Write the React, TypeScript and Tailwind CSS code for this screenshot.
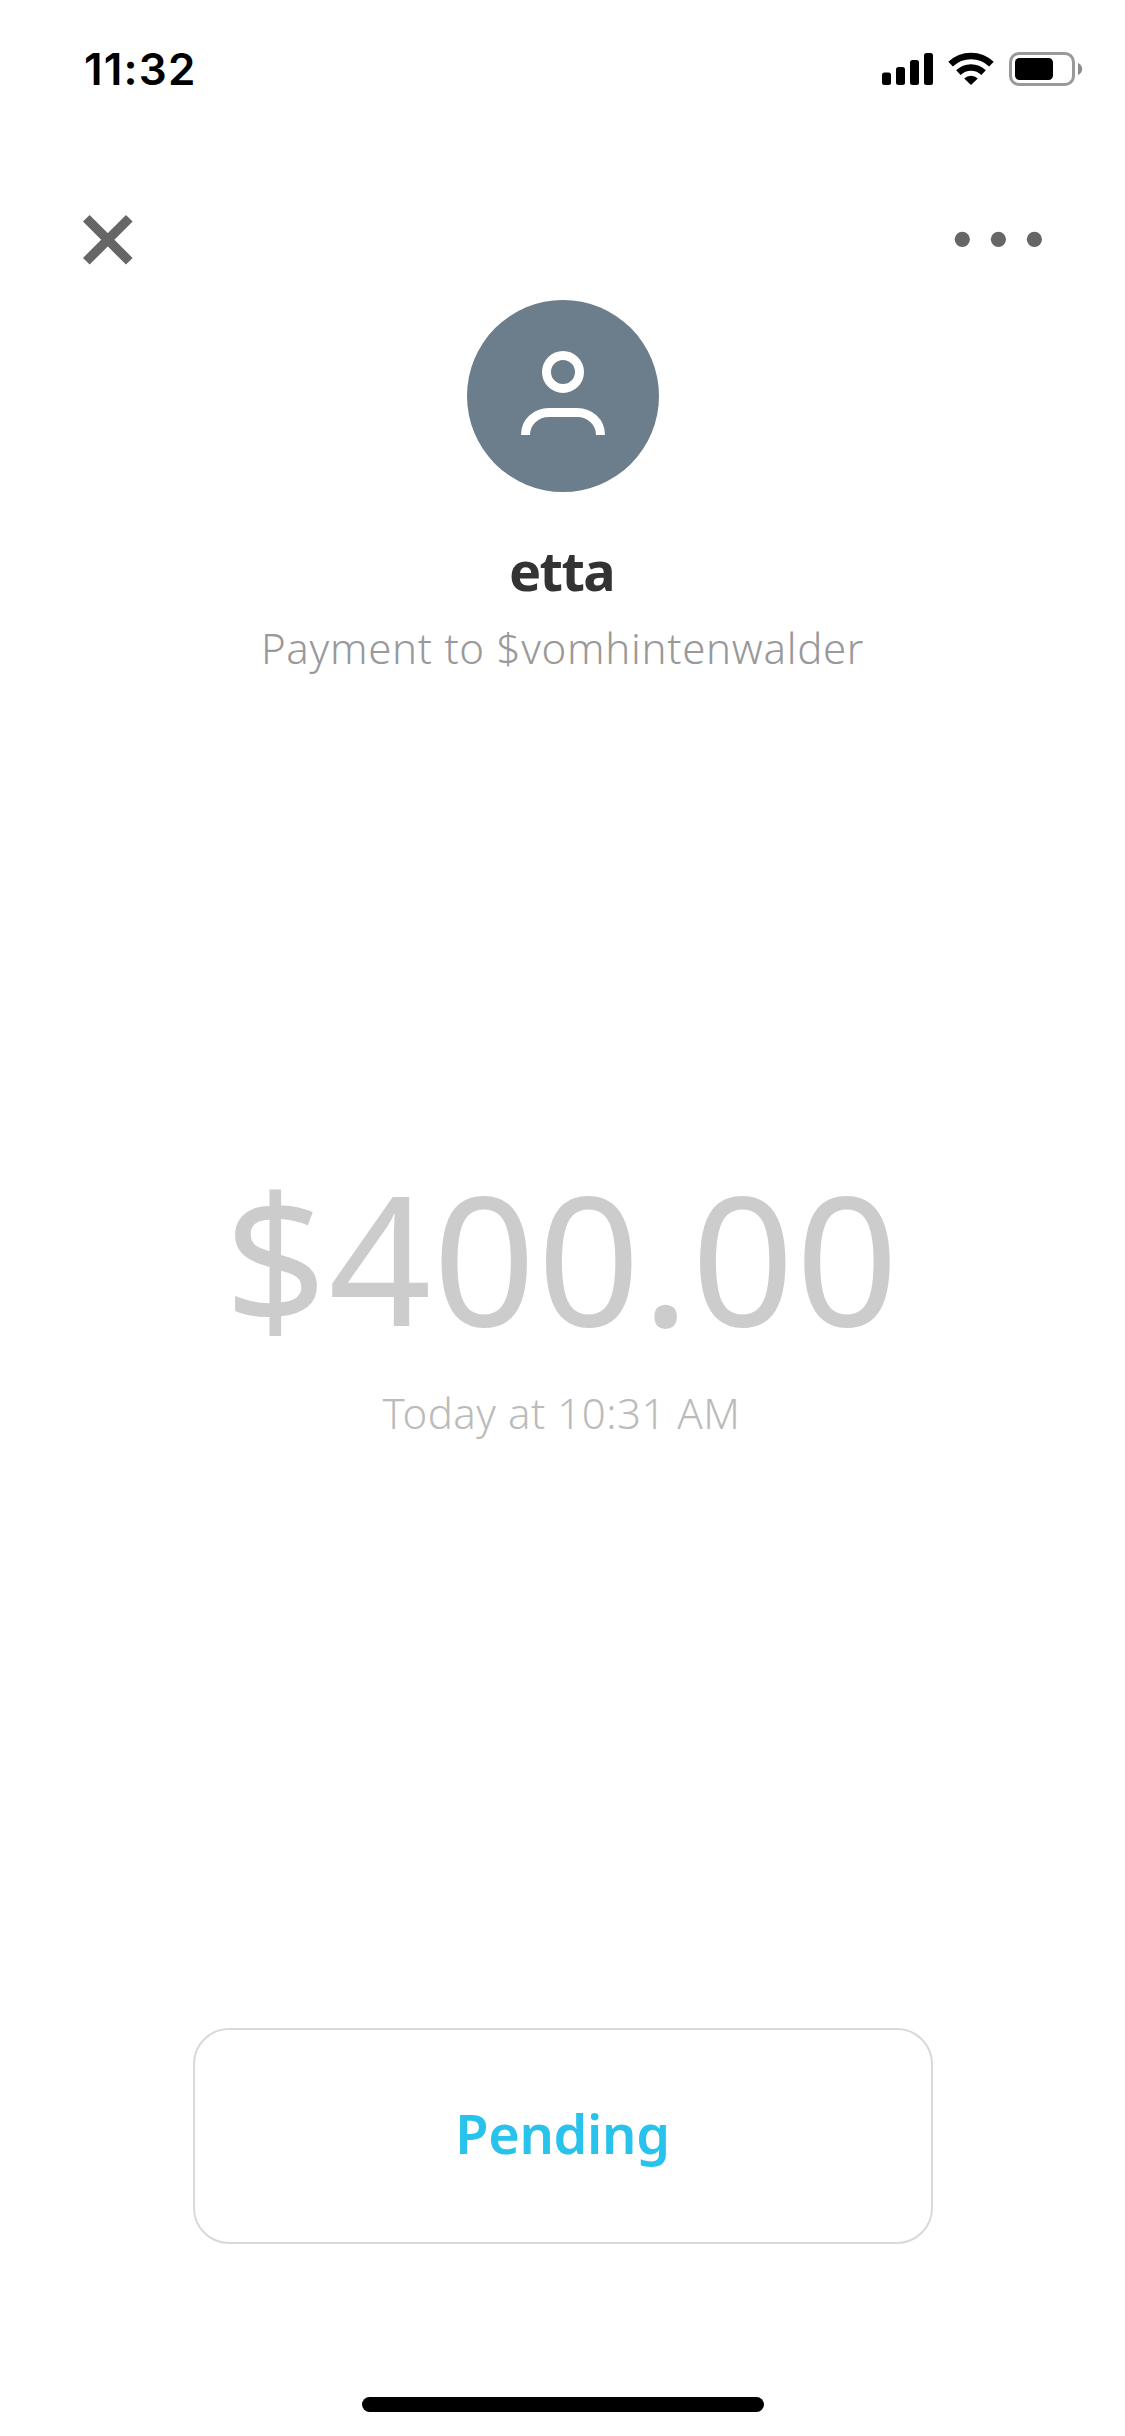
import React from "react";

interface Payment {
  name: string;
  description: string;
  amount: string;
  date: string;
  status: string;
}

const payment: Payment = {
  name: "etta",
  description: "Payment to $vomhintenwalder",
  amount: "$400.00",
  date: "Today at 10:31 AM",
  status: "Pending",
};

const SignalIcon = () => (
  <svg width="52" height="34" viewBox="0 0 52 34" fill="#000">
    <rect x="0" y="20.5" width="9" height="12.5" rx="2.5" />
    <rect x="14" y="15" width="9" height="18" rx="2.5" />
    <rect x="28" y="8" width="9" height="25" rx="2.5" />
    <rect x="42" y="1" width="9" height="32" rx="2.5" />
  </svg>
);

const WifiIcon = () => (
  <svg width="46" height="34" viewBox="0 0 46 34" fill="none">
    <path d="M2.6 12.2A29.5 29.5 0 0 1 43.4 12.2" stroke="#000" strokeWidth="6.6" />
    <path d="M10.4 20.6A18 18 0 0 1 35.6 20.6" stroke="#000" strokeWidth="6.4" />
    <path d="M23 33L16.2 26.6A9.8 9.8 0 0 1 29.8 26.6Z" fill="#000" />
  </svg>
);

const BatteryIcon = () => (
  <svg width="74" height="34" viewBox="0 0 74 34" fill="none">
    <rect x="1.5" y="1.5" width="63" height="31" rx="8.5" stroke="#999" strokeWidth="3" />
    <rect x="6" y="6" width="38" height="22" rx="4.5" fill="#000" />
    <path d="M69 11C71.7 12.2 73.2 14.4 73.2 17S71.7 21.8 69 23Z" fill="#8c8c8c" />
  </svg>
);

const StatusBar = () => (
  <div className="flex h-[138px] items-start justify-between pt-[52px] pl-[84px] pr-[42px]">
    <span className="font-['Inter'] text-[44px] leading-[34px] font-semibold tracking-[1.2px] text-black">
      11:32
    </span>
    <div className="flex items-center">
      <SignalIcon />
      <div className="mr-[15px] ml-[14px]">
        <WifiIcon />
      </div>
      <BatteryIcon />
    </div>
  </div>
);

const Header = () => (
  <div className="flex h-[162px] items-start justify-between pt-[76px] pl-[82px] pr-[82px]">
    <button aria-label="Close">
      <svg width="52" height="52" viewBox="0 0 52 52" stroke="#666" strokeWidth="9.4">
        <path d="M4.3 4.3L47.3 47.3M47.3 4.3L4.3 47.3" />
      </svg>
    </button>
    <button aria-label="More" className="pt-[16px]">
      <svg width="90" height="18" viewBox="0 0 90 18" fill="#666">
        <circle cx="9.3" cy="9.3" r="7.6" />
        <circle cx="45.4" cy="9.3" r="7.6" />
        <circle cx="81.4" cy="9.3" r="7.6" />
      </svg>
    </button>
  </div>
);

const Avatar = () => (
  <div className="h-[192px] w-[192px] rounded-full bg-[#6c7d8c]">
    <svg width="192" height="192" viewBox="0 0 192 192" fill="none" stroke="#fff" strokeWidth="9">
      <circle cx="96" cy="72" r="16.5" />
      <path d="M58.5 135C58.5 122 69 112.5 82 112.5H110C123 112.5 133.5 122 133.5 135" />
    </svg>
  </div>
);

const App = () => {
  return (
    <div className="flex h-[2436px] w-full flex-col bg-white font-['Noto_Sans',sans-serif]">
      <StatusBar />
      <Header />

      <div className="flex h-[820px] flex-col items-center">
        <Avatar />
        <h1 className="mt-[43px] pr-[2px] text-[54px] leading-[70px] font-bold tracking-[-1.6px] text-[#333]">
          {payment.name}
        </h1>
        <p className="mt-[8px] text-[42px] leading-[70px] font-light tracking-[0.7px] text-[#999]">
          {payment.description}
        </p>
      </div>

      <div className="flex h-[908px] flex-col items-center pt-[37px]">
        <div className="pr-[1px] text-[180px] leading-[200px] font-normal tracking-[1.4px] text-[#ccc]">
          {payment.amount}
        </div>
        <p className="mt-[21px] pr-[2px] text-[42px] leading-[70px] font-light tracking-[0.5px] text-[#bbb]">
          {payment.date}
        </p>
      </div>

      <div className="flex flex-1 flex-col items-center">
        <button className="h-[216px] w-[740px] rounded-[36px] border-2 border-[#d9d9d9] pb-[6px] text-[54px] font-semibold tracking-[-0.3px] text-[#28c3ec]">
          {payment.status}
        </button>
      </div>

      <div className="flex justify-center pb-[24px]">
        <div className="h-[15px] w-[402px] rounded-full bg-black" />
      </div>
    </div>
  );
};

export default App;
